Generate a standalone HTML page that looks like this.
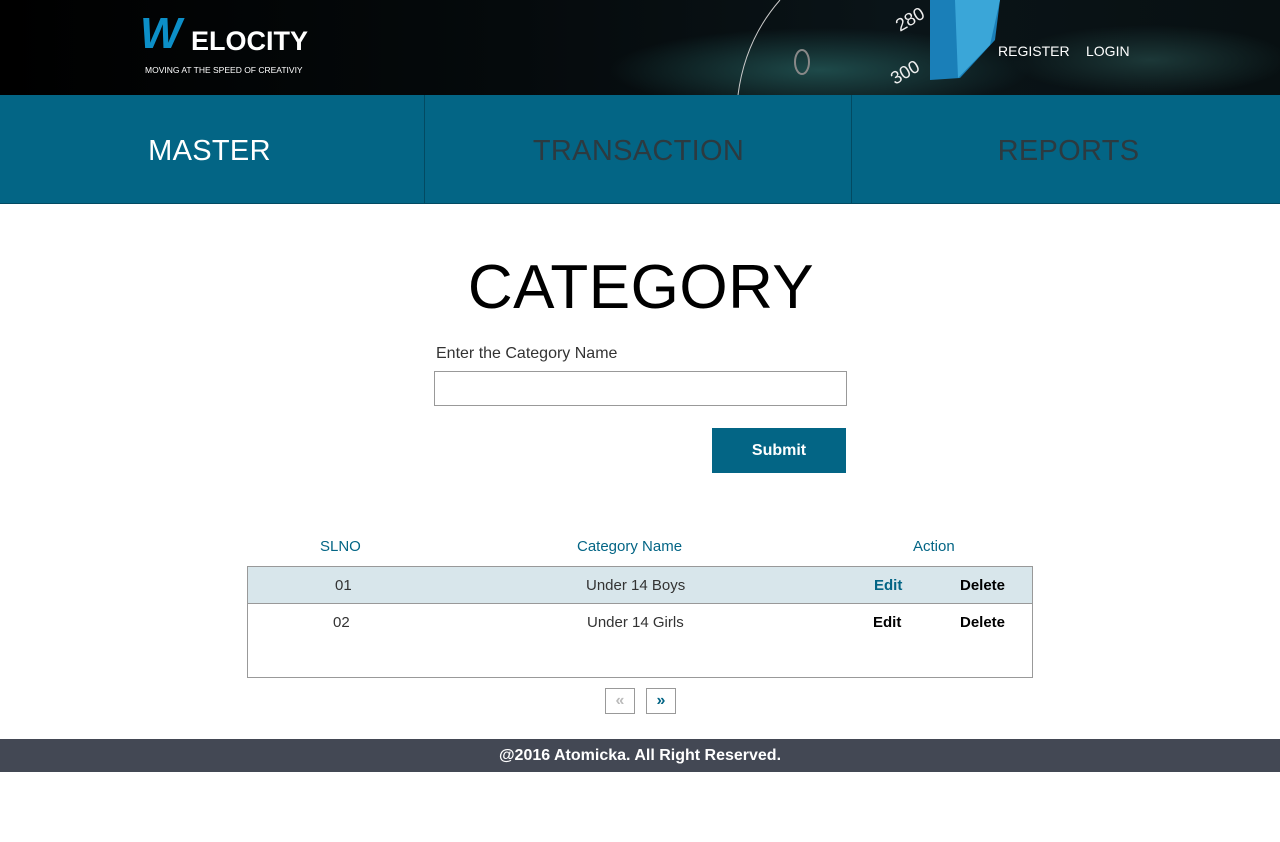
<!DOCTYPE html>
<html><head><style>
body{margin:0;width:1280px;height:842px;background:#fff;font-family:"Liberation Sans",sans-serif;position:relative;overflow:hidden}
.hdr{position:absolute;left:0;top:0;width:1280px;height:95px;background:radial-gradient(ellipse 300px 60px at 820px 70px,#1e4a4a 0%,transparent 70%),radial-gradient(ellipse 200px 50px at 1150px 60px,#1c3838 0%,transparent 70%),linear-gradient(90deg,#000 0%,#050a0c 40%,#0a1418 70%,#081012 100%)}
.nav{position:absolute;top:95px;left:0;width:1280px;height:108px;background:#036585;border-bottom:1px solid #024a62}
.nav div{position:absolute;top:0;height:108px;line-height:112px;font-size:29px;color:#2c3a40;letter-spacing:0.3px}
.a{position:absolute;white-space:nowrap}
</style></head><body>
<div class="hdr">
<div class="a" style="left:140px;top:12px;color:#0c8fc8;font-size:44px;font-weight:bold;font-style:italic;line-height:44px">W</div>
<div class="a" style="left:191px;top:25px;color:#fff;font-size:27px;font-weight:bold;line-height:32px">ELOCITY</div>
<div class="a" style="left:145px;top:65px;color:#fff;font-size:8.5px">MOVING AT THE SPEED OF CREATIVIY</div>
<svg class="a" style="left:720px;top:0" width="290" height="95">
<path d="M930 0 L1000 0 L995 40 L960 78 L930 80 Z" transform="translate(-720,0)" fill="#1a7fb8"/>
<path d="M955 0 L1000 0 L990 45 L958 78 Z" transform="translate(-720,0)" fill="#3aa6d8"/>
<path d="M780 0 Q745 40 738 95" transform="translate(-720,0)" stroke="#ccc" fill="none" stroke-width="1"/>
<text x="180" y="32" fill="#eee" font-size="18" transform="rotate(-30 180 32)">280</text>
<text x="175" y="85" fill="#eee" font-size="18" transform="rotate(-30 175 85)">300</text>
<ellipse cx="82" cy="62" rx="7" ry="12" stroke="#888" stroke-width="2" fill="none"/>
</svg>
<div class="a" style="left:998px;top:43px;color:#fff;font-size:14px">REGISTER</div>
<div class="a" style="left:1086px;top:43px;color:#fff;font-size:14px">LOGIN</div>
</div>
<div class="nav">
<div style="left:0;width:425px;border-right:1px solid #024a62;text-align:center;color:#fff;padding-right:5px;box-sizing:border-box">MASTER</div>
<div style="left:426px;width:425px;border-right:1px solid #024a62;text-align:center">TRANSACTION</div>
<div style="left:852px;width:428px;text-align:center;padding-left:5px;box-sizing:border-box">REPORTS</div>
</div>
<div class="a" style="left:0;width:1282px;top:252px;text-align:center;font-size:62px;color:#000;letter-spacing:0.5px">CATEGORY</div>
<div class="a" style="left:436px;top:345px;font-size:16px;color:#333">Enter the Category Name</div>
<div class="a" style="left:434px;top:371px;width:411px;height:33px;border:1px solid #999"></div>
<div class="a" style="left:712px;top:428px;width:134px;height:45px;background:#036585;color:#fff;font-size:16px;font-weight:bold;text-align:center;line-height:46px">Submit</div>
<div class="a" style="left:320px;top:538px;color:#036585;font-size:15px">SLNO</div>
<div class="a" style="left:577px;top:538px;color:#036585;font-size:15px">Category Name</div>
<div class="a" style="left:913px;top:538px;color:#036585;font-size:15px">Action</div>
<div class="a" style="left:247px;top:566px;width:784px;height:110px;border:1px solid #999"></div>
<div class="a" style="left:248px;top:567px;width:784px;height:36px;background:#d8e6eb;border-bottom:1px solid #999"></div>
<div class="a" style="left:335px;top:577px;font-size:15px;color:#333">01</div>
<div class="a" style="left:586px;top:577px;font-size:15px;color:#333">Under 14 Boys</div>
<div class="a" style="left:874px;top:577px;font-size:15px;color:#036585;font-weight:bold">Edit</div>
<div class="a" style="left:960px;top:577px;font-size:15px;color:#000;font-weight:bold">Delete</div>
<div class="a" style="left:333px;top:614px;font-size:15px;color:#333">02</div>
<div class="a" style="left:587px;top:614px;font-size:15px;color:#333">Under 14 Girls</div>
<div class="a" style="left:873px;top:614px;font-size:15px;color:#000;font-weight:bold">Edit</div>
<div class="a" style="left:960px;top:614px;font-size:15px;color:#000;font-weight:bold">Delete</div>
<div class="a" style="left:605px;top:688px;width:28px;height:24px;border:1px solid #999;color:#bbb;text-align:center;line-height:24px;font-weight:bold">«</div>
<div class="a" style="left:646px;top:688px;width:28px;height:24px;border:1px solid #999;color:#036585;text-align:center;line-height:24px;font-weight:bold">»</div>
<div class="a" style="left:0;top:739px;width:1280px;height:33px;background:#434854;color:#fff;text-align:center;line-height:33px;font-size:16px;font-weight:bold">@2016 Atomicka. All Right Reserved.</div>
</body></html>
